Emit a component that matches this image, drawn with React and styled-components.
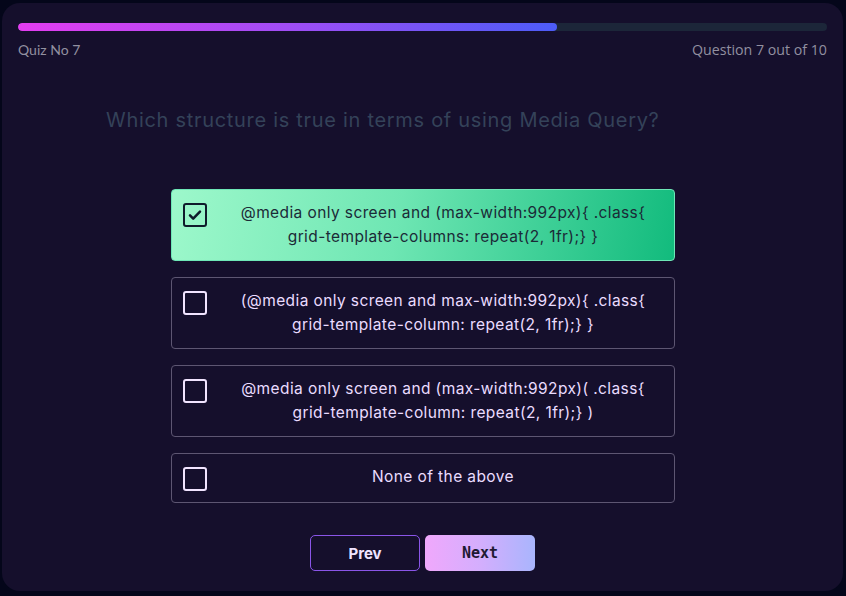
import React from 'react';
import styled, { createGlobalStyle } from 'styled-components';

const GlobalStyle = createGlobalStyle`
  html, body {
    margin: 0;
    padding: 0;
    background: #04061a;
  }
  * {
    box-sizing: border-box;
  }
`;

const options = [
  {
    text: '@media only screen and (max-width:992px){ .class{ grid-template-columns: repeat(2, 1fr);} }',
    selected: true,
  },
  {
    text: '(@media only screen and max-width:992px){ .class{ grid-template-column: repeat(2, 1fr);} }',
  },
  {
    text: '@media only screen and (max-width:992px)( .class{ grid-template-column: repeat(2, 1fr);} )',
  },
  { text: 'None of the above' },
];

const Quiz = () => {
  return (
    <Page>
      <GlobalStyle />
      <Card>
        <Track>
          <Fill style={{ width: '66.6%' }} />
        </Track>
        <MetaRow>
          <QuizLabel>Quiz No 7</QuizLabel>
          <Counter>Question 7 out of 10</Counter>
        </MetaRow>

        <Question>Which structure is true in terms of using Media Query?</Question>

        <OptionList>
          {options.map((opt, i) => (
            <Option key={i} $selected={opt.selected}>
              <Box $selected={opt.selected}>
                {opt.selected && (
                  <svg width="16" height="16" viewBox="0 0 24 24" fill="none">
                    <path
                      d="M4.5 12.5l4.8 4.8L19.5 7"
                      stroke="#0f1b2b"
                      strokeWidth="3.8"
                      strokeLinecap="round"
                      strokeLinejoin="round"
                    />
                  </svg>
                )}
              </Box>
              <OptionText $selected={opt.selected}>{opt.text}</OptionText>
            </Option>
          ))}
        </OptionList>

        <Actions>
          <PrevButton>Prev</PrevButton>
          <NextButton>Next</NextButton>
        </Actions>
      </Card>
    </Page>
  );
};

const Page = styled.div`
  width: 846px;
  height: 596px;
  padding: 3px 3px 5px 2px;
`;

const Card = styled.div`
  height: 100%;
  background: #150f2c;
  border-radius: 18px;
  padding: 20px 16px;
  display: flex;
  flex-direction: column;
`;

const Track = styled.div`
  height: 8px;
  border-radius: 4px;
  background: #1c2639;
  overflow: hidden;
`;

const Fill = styled.div`
  height: 100%;
  border-radius: 4px;
  background: linear-gradient(90deg, #e33df0 0%, #a04df5 50%, #4c5cf7 100%);
`;

const MetaRow = styled.div`
  display: flex;
  justify-content: space-between;
  align-items: center;
  margin-top: 9px;
  height: 18px;
`;

const QuizLabel = styled.span`
  font-family: Lato, 'Liberation Sans', sans-serif;
  font-size: 14px;
  color: #9290a0;
`;

const Counter = styled.span`
  font-family: 'Open Sans', 'Liberation Sans', sans-serif;
  font-size: 14.2px;
  color: #9290a0;
`;

const Question = styled.h2`
  margin: 48px 0 0 88px;
  font-family: Inter, 'Liberation Sans', sans-serif;
  font-weight: 400;
  font-size: 20px;
  letter-spacing: 0.7px;
  line-height: 28px;
  color: #344259;
`;

const OptionList = styled.div`
  width: 504px;
  margin: 55px auto 0;
  display: flex;
  flex-direction: column;
  gap: 16px;
`;

const Option = styled.div`
  display: flex;
  align-items: flex-start;
  gap: 12px;
  padding: 11px 12px 11px 11px;
  border-radius: 4px;
  border: 1px solid ${(p) => (p.$selected ? '#6ee7b7' : '#5d5672')};
  background: ${(p) =>
    p.$selected
      ? 'linear-gradient(100deg, #9df8cb 0%, #6ee6b3 45%, #12bb7d 100%)'
      : 'transparent'};
`;

const Box = styled.span`
  flex: none;
  width: 24px;
  height: 24px;
  margin-top: 2px;
  border-radius: 3px;
  border: 2.5px solid ${(p) => (p.$selected ? '#0f1b2b' : '#f1e4ff')};
  display: flex;
  align-items: center;
  justify-content: center;
`;

const OptionText = styled.p`
  flex: 1;
  margin: 0;
  text-align: center;
  font-family: Inter, 'Liberation Sans', sans-serif;
  font-size: 15.5px;
  letter-spacing: 0.4px;
  line-height: 24px;
  padding: 0 8px 0 14px;
  color: ${(p) => (p.$selected ? '#1b2a37' : '#eadcff')};
`;

const Actions = styled.div`
  display: flex;
  justify-content: center;
  gap: 5px;
  margin-top: 32px;
`;

const ButtonBase = styled.button`
  width: 110px;
  height: 36px;
  border-radius: 5px;
  font-size: 15px;
  font-weight: 700;
  cursor: pointer;
`;

const PrevButton = styled(ButtonBase)`
  background: transparent;
  border: 1px solid #8a55e8;
  color: #efe3ff;
  font-family: Inter, 'Liberation Sans', sans-serif;
`;

const NextButton = styled(ButtonBase)`
  border: none;
  background: linear-gradient(90deg, #f0a8fc 0%, #d4aefd 50%, #a9b5fd 100%);
  color: #1e1a33;
  font-family: 'DejaVu Sans Mono', 'Liberation Mono', monospace;
`;

export default Quiz;
